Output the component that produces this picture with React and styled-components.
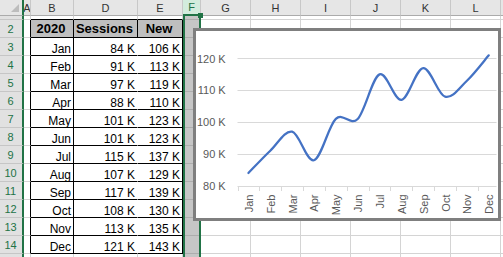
import React from 'react';
import styled, { createGlobalStyle } from 'styled-components';

const GREEN = '#217346';
const GRID = '#d4d4d4';

const GlobalStyle = createGlobalStyle`
  html, body {
    margin: 0;
    padding: 0;
    background: #fff;
  }
  body {
    font-family: "Liberation Sans", Arial, sans-serif;
    overflow: hidden;
  }
`;

const Sheet = styled.div`
  position: relative;
  display: grid;
  grid-template-columns: 24px 7px 43px 64px 45px 18px repeat(7, 50px);
  grid-template-rows: 16px 4px repeat(14, 18px);
  width: 503px;
  height: 257px;
  overflow: hidden;
`;

const Corner = styled.div`
  box-sizing: border-box;
  display: flex;
  align-items: flex-end;
  justify-content: flex-end;
  padding: 0 3px 3px 0;
  background: #e6e6e6;
  border-right: 2px solid ${GREEN};
  border-bottom: 1px solid #ababab;
`;

const ColHead = styled.div`
  box-sizing: border-box;
  display: flex;
  align-items: center;
  justify-content: center;
  background: ${p => (p.$active ? '#d3ecdd' : '#e6e6e6')};
  color: ${p => (p.$active ? GREEN : '#333')};
  border-right: 1px solid #c8c8c8;
  border-bottom: ${p => (p.$active ? `2px solid ${GREEN}` : '1px solid #ababab')};
  font-size: 11px;
  overflow: hidden;
`;

const RowHead = styled.div`
  box-sizing: border-box;
  display: flex;
  align-items: center;
  justify-content: center;
  padding-right: 1px;
  background: #e1e1e1;
  color: ${GREEN};
  border-right: 2px solid ${GREEN};
  border-bottom: 1px solid #c6c6c6;
  font-size: 11px;
`;

const Cell = styled.div`
  box-sizing: border-box;
  display: flex;
  align-items: ${p => (p.$head ? 'center' : 'flex-end')};
  justify-content: ${p => (p.$head ? 'center' : 'flex-end')};
  padding: 0 2px 0 0;
  background: ${p => p.$fill || '#fff'};
  border-right: 1px solid ${p => p.$right || GRID};
  border-bottom: 1px solid ${p => p.$bottom || GRID};
  font-size: ${p => (p.$head ? '13px' : '12px')};
  font-weight: ${p => (p.$head ? 700 : 400)};
  line-height: ${p => (p.$head ? '13px' : '12px')};
  color: #000;
  white-space: nowrap;
  overflow: hidden;
`;

const Selection = styled.div`
  position: absolute;
  left: 183px;
  top: 14px;
  width: 18px;
  height: 250px;
  box-sizing: border-box;
  border: 2px solid ${GREEN};
  pointer-events: none;
`;

const Handle = styled.div`
  position: absolute;
  right: -4px;
  top: -3px;
  width: 5px;
  height: 5px;
  background: ${GREEN};
`;

const ChartBox = styled.div`
  position: absolute;
  left: 193px;
  top: 28px;
  width: 308px;
  height: 193px;
  box-sizing: border-box;
  border: 3px solid #7f7f7f;
  background: #fff;
  overflow: hidden;
`;

const cols = ['A', 'B', 'D', 'E', 'F', 'G', 'H', 'I', 'J', 'K', 'L', ''];
const months = ['Jan', 'Feb', 'Mar', 'Apr', 'May', 'Jun', 'Jul', 'Aug', 'Sep', 'Oct', 'Nov', 'Dec'];
const sessions = [84, 91, 97, 88, 101, 101, 115, 107, 117, 108, 113, 121];
const newUsers = [106, 113, 119, 110, 123, 123, 137, 129, 139, 130, 135, 143];

// what a cell holds and how it is bordered
function cellFor(row, col) {
  const inTable = row >= 2 && row <= 14;
  const p = {};
  let text = '';

  if (col === 'F') {
    p.$fill = '#c6c6c6';
    p.$right = '#adadad';
    p.$bottom = '#adadad';
    return { text, p };
  }
  if (row === 1 && ['B', 'D', 'E'].includes(col)) p.$bottom = '#000';
  if (inTable) {
    if (col === 'A') p.$right = '#000';
    if (col === 'B' || col === 'D' || col === 'E') {
      p.$bottom = '#000';
      p.$right = col === 'D' && row > 2 ? '#fff' : '#000';
      if (row === 2) {
        p.$fill = '#bfbfbf';
        p.$head = true;
        text = { B: '2020', D: 'Sessions', E: 'New' }[col];
      } else {
        const i = row - 3;
        if (col === 'B') text = months[i];
        if (col === 'D') text = `${sessions[i]} K`;
        if (col === 'E') text = `${newUsers[i]} K`;
      }
    }
  }
  return { text, p };
}

// chart geometry, in the chart's inner coordinates
const plotLeft = 41.5;
const catW = 21.85;
const axisY = 154.7;
const perK = 3.18;
const yFor = v => axisY - (v - 80) * perK;
const xFor = i => plotLeft + catW * (i + 0.5);

function smoothPath(values) {
  const pts = values.map((v, i) => [xFor(i), yFor(v)]);
  const at = i => pts[Math.max(0, Math.min(pts.length - 1, i))];
  let d = `M${pts[0][0]},${pts[0][1]}`;
  for (let i = 0; i < pts.length - 1; i++) {
    const p0 = at(i - 1), p1 = at(i), p2 = at(i + 1), p3 = at(i + 2);
    const c1 = [p1[0] + (p2[0] - p0[0]) / 6, p1[1] + (p2[1] - p0[1]) / 6];
    const c2 = [p2[0] - (p3[0] - p1[0]) / 6, p2[1] - (p3[1] - p1[1]) / 6];
    d += ` C${c1[0].toFixed(2)},${c1[1].toFixed(2)} ${c2[0].toFixed(2)},${c2[1].toFixed(2)} ${p2[0].toFixed(2)},${p2[1].toFixed(2)}`;
  }
  return d;
}

const SessionsChart = () => (
  <ChartBox>
    <svg width="302" height="187" viewBox="0 0 302 187">
      {[80, 90, 100, 110, 120].map(v => {
        const y = Math.round(yFor(v)) + 0.5;
        return (
          <g key={v}>
            <line x1={plotLeft} x2="300.5" y1={y} y2={y} stroke="#d9d9d9" strokeWidth="1" />
            <text
              x="29.7"
              y={yFor(v) + 4}
              textAnchor="end"
              fontSize="11"
              fill="#595959"
              fontFamily="'Liberation Sans', Arial, sans-serif"
            >
              {v} K
            </text>
          </g>
        );
      })}
      {Array.from({ length: 13 }, (_, k) => {
        const x = Math.round(plotLeft + catW * k) + 0.5;
        return <line key={k} x1={x} x2={x} y1={Math.round(axisY)} y2={Math.round(axisY) + 5} stroke="#d9d9d9" />;
      })}
      {months.map((m, i) => (
        <text
          key={m}
          transform={`translate(${xFor(i) + 4.5},163.5) rotate(-90)`}
          textAnchor="end"
          fontSize="11"
          fill="#595959"
          fontFamily="'Liberation Sans', Arial, sans-serif"
        >
          {m}
        </text>
      ))}
      <path
        d={smoothPath(sessions)}
        fill="none"
        stroke="#4472c4"
        strokeWidth="2.25"
        strokeLinecap="round"
        strokeLinejoin="round"
      />
    </svg>
  </ChartBox>
);

const App = () => {
  const rows = Array.from({ length: 15 }, (_, i) => i + 1);
  return (
    <>
      <GlobalStyle />
      <Sheet>
        <Corner>
          <svg width="8" height="8" viewBox="0 0 8 8">
            <path d="M8 0 L8 8 L0 8 Z" fill="#bdbdbd" />
          </svg>
        </Corner>
        {cols.map((c, i) => (
          <ColHead key={c || i} $active={c === 'F'}>{c}</ColHead>
        ))}
        {rows.map(r => (
          <React.Fragment key={r}>
            <RowHead>{r === 1 || r === 15 ? '' : r}</RowHead>
            {cols.map((c, i) => {
              const { text, p } = cellFor(r, c);
              return (
                <Cell key={c || i} {...p}>
                  {text}
                </Cell>
              );
            })}
          </React.Fragment>
        ))}
        <Selection>
          <Handle />
        </Selection>
        <SessionsChart />
      </Sheet>
    </>
  );
};

export default App;
